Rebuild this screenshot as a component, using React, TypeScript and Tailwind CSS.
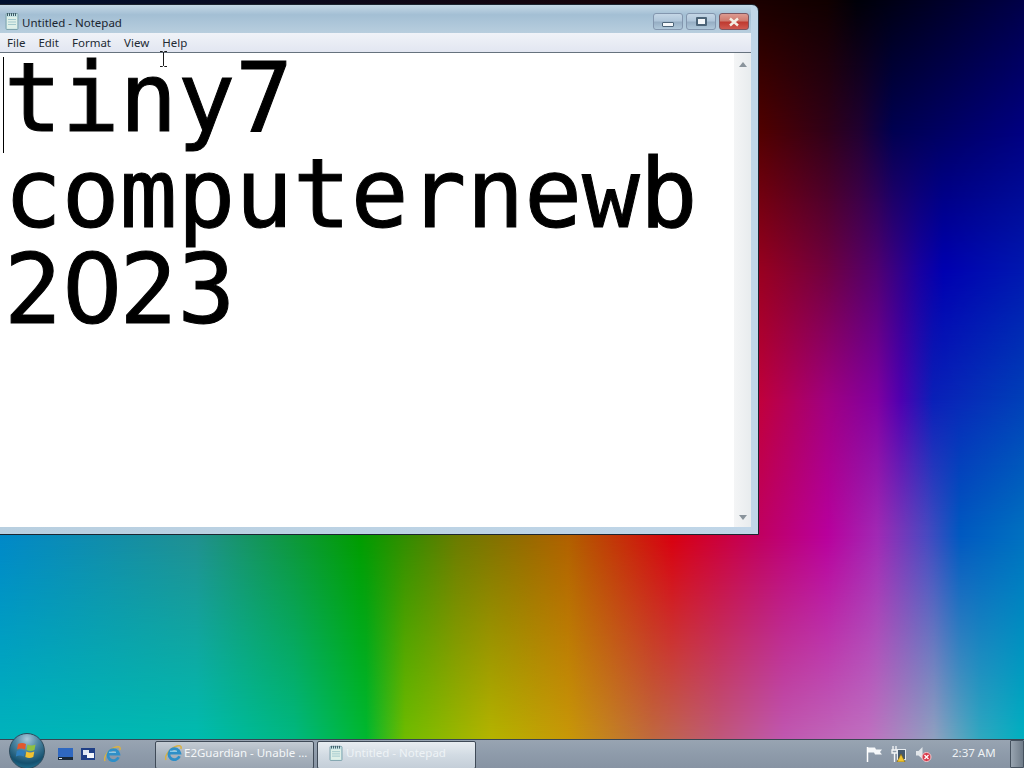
import React from "react";

const ui = "font-['Noto_Sans','Open_Sans',sans-serif]";

function NotepadIcon({ tall = false }: { tall?: boolean }) {
  return (
    <svg width={14} height={tall ? 18 : 16} viewBox="0 0 14 18" preserveAspectRatio="none" className="shrink-0">
      <rect x="1" y="1.500" width="12" height="16" rx="1" fill="#c4e2e4" stroke="#7ea3ac" />
      <rect x="2" y="5" width="10" height="11.500" fill="#dff0e8" />
      <path d="M2.500 1v3M4.500 1v3M6.500 1v3M8.500 1v3M10.500 1v3" stroke="#3d5a66" strokeWidth="1" />
      <path d="M3 7.500h8M3 10h8M3 12.500h8" stroke="#a3c9cd" strokeWidth="1" />
    </svg>
  );
}

function IeIcon() {
  return (
    <svg width="17" height="16" viewBox="0 0 17 16" className="shrink-0">
      <path d="M1 15C-1 11 5 3 12 1c3-.8 5 0 3.800 3" fill="none" stroke="#d9b244" strokeWidth="1.500" />
      <path d="M14.500 11.300A5.500 5.500 0 1 1 14.800 8H4.500" fill="none" stroke="#2e8fc8" strokeWidth="2.800" />
      <path d="M5 6.300h7" stroke="#8fd0ec" strokeWidth="1.200" />
    </svg>
  );
}

function StartOrb() {
  return (
    <div className="absolute left-[9px] top-[-7px] flex h-[36px] w-[36px] items-center justify-center rounded-full border border-[#2c4a5c] bg-[radial-gradient(circle_at_50%_15%,#a8c8d8_0%,#4d86a3_35%,#14506e_72%,#2a86a8_100%)]">
      <svg width="22" height="21" viewBox="0 0 22 21">
        <path d="M2 3c3-1.500 5-1.500 8 0L9 8.500c-3-1.500-5-1.500-8 0z" fill="#e2582d" />
        <path d="M11.500 3.500c3 1.400 5 1.400 8 0l-1 5.500c-3 1.400-5 1.400-8 0z" fill="#8fc043" />
        <path d="M.8 10c3-1.500 5-1.500 8 0l-1 5.500c-3-1.500-5-1.500-8 0z" fill="#2f7fbd" />
        <path d="M10.300 10.500c3 1.400 5 1.400 8 0l-1 5.500c-3 1.400-5 1.400-8 0z" fill="#f2c230" />
      </svg>
    </div>
  );
}

function CaptionButton({ kind }: { kind: "min" | "max" | "close" }) {
  if (kind === "close") {
    return (
      <div className="flex h-[17px] w-[30px] items-center justify-center rounded-[3px] border border-[#7d5660] bg-[linear-gradient(#dd9a90_0%,#cf7a6e_45%,#bf3a30_55%,#cf5a50_100%)]">
        <svg width="12" height="10" viewBox="0 0 12 10">
          <path d="M2 1.500l8 7M10 1.500l-8 7" stroke="#f4efe4" strokeWidth="2.400" />
        </svg>
      </div>
    );
  }
  return (
    <div className="flex h-[17px] w-[30px] items-center justify-center rounded-[3px] border border-[#8396ae] bg-[linear-gradient(#c4d6e6_0%,#b0c6da_45%,#96aec4_55%,#b0c8da_100%)]">
      {kind === "min" ? (
        <div className="mt-[5px] h-[5px] w-[12px] rounded-[1px] border border-[#4c6478] bg-[#f4f7fa]" />
      ) : (
        <div className="h-[9px] w-[11px] rounded-[1px] border-2 border-[#4c6478] bg-[#f4f7fa]" />
      )}
    </div>
  );
}

function TaskButton({ active, label, icon }: { active?: boolean; label: string; icon: React.ReactNode }) {
  return (
    <div
      className={
        "flex h-[28px] w-[159px] items-center gap-[2px] whitespace-nowrap rounded-[2px] border border-[#3f4a57] pb-[3px] pl-[9px] text-[11.5px] " +
        (active
          ? "bg-[linear-gradient(#e8edf1_0%,#d2dbe3_50%,#c4ced8_100%)] text-[#eef3f6]"
          : "bg-[linear-gradient(#c4ccd4_0%,#a9b3be_50%,#9aa5b2_100%)] text-[#f4f7f9]")
      }
    >
      {icon}
      <span>{label}</span>
    </div>
  );
}

export default function App() {
  return (
    <div className={"relative h-[768px] w-[1024px] overflow-hidden " + ui}>
      {/* Wallpaper: horizontal colour bands at fixed heights, cross-faded downwards */}
      <div className="absolute inset-0 bg-[linear-gradient(90deg,#00b4bc_0px,#00bcb0_196px,#00b880_294px,#00b830_366px,#70bc00_405px,#b4b400_490px,#c89808_568px,#c06840_653px,#c05878_718px,#c058b0_784px,#c070c0_868px,#90a0c0_934px,#30a8c0_980px,#00b0c0_1024px)]" />
      <div className="absolute inset-0 bg-[linear-gradient(90deg,#0088c8_0px,#209090_196px,#009c00_360px,#6a7a00_457px,#b06000_568px,#d80010_672px,#c00060_760px,#b8009c_827px,#a028b4_877px,#4848c0_927px,#0058c0_960px,#0070c0_1024px)] [mask-image:linear-gradient(#000_535px,transparent_738px)]" />
      <div className="absolute inset-0 bg-[linear-gradient(90deg,#c0003c_760px,#a00080_827px,#8000a0_877px,#5000b0_900px,#0a20b8_933px,#0040b8_1024px)] [mask-image:linear-gradient(#000_400px,transparent_530px)]" />
      <div className="absolute inset-0 bg-[linear-gradient(90deg,#980020_760px,#700040_827px,#500070_877px,#1800a0_920px,#0000b0_943px,#0018b0_1024px)] [mask-image:linear-gradient(#000_270px,transparent_400px)]" />
      <div className="absolute inset-0 bg-[linear-gradient(90deg,#500000_760px,#300018_827px,#200030_860px,#000050_893px,#000080_1024px)] [mask-image:linear-gradient(#000_130px,transparent_270px)]" />
      <div className="absolute inset-0 bg-[linear-gradient(90deg,#001030_0px,#1a0000_760px,#100000_827px,#000008_857px,#000048_1024px)] [mask-image:linear-gradient(#000_0px,transparent_130px)]" />

      {/* Notepad window */}
      <div className="absolute left-[-8px] top-[4px] flex h-[531px] w-[767px] flex-col rounded-t-[7px] border border-[#1c2530] bg-[linear-gradient(90deg,#b8cfe0_0%,#c0d6e8_100%)] px-[7px] pb-[7px]">
        <div className="flex h-[28px] shrink-0 items-start justify-between bg-[linear-gradient(#c5d8e6_0%,#a3bfd4_35%,#b8cede_100%)] pl-[5px] pr-[2px]">
          <div className="flex items-center gap-[3px] pt-[5px] text-[11.5px] text-[#1a2530]">
            <NotepadIcon tall />
            <span className="pt-[4px]">Untitled - Notepad</span>
          </div>
          <div className="flex gap-[3px] pt-[8px]">
            <CaptionButton kind="min" />
            <CaptionButton kind="max" />
            <CaptionButton kind="close" />
          </div>
        </div>
        <div className="flex h-[20px] shrink-0 items-center gap-[13px] border-b border-[#66727e] bg-[linear-gradient(#f0f3f8_0%,#e2e6f1_100%)] pl-[7px] text-[11.5px] text-[#222a33]">
          <span>File</span>
          <span>Edit</span>
          <span>Format</span>
          <span>View</span>
          <span>Help</span>
        </div>
        <div className="flex min-h-0 flex-1 bg-white">
          <div className="relative flex-1 pl-[4px] font-['DejaVu_Sans_Mono',monospace] text-[96px] leading-[96px] text-black [-webkit-text-stroke:1px_black]">
            <div className="absolute left-[3px] top-[4px] h-[96px] w-px bg-black" />
            <div className="mt-[-3px]">tiny7</div>
            <div>computernewb</div>
            <div>
              2<span className="inline-block w-[57.800px] font-['DejaVu_Sans',sans-serif]">0</span>23
            </div>
          </div>
          <div className="flex w-[17px] flex-col items-center justify-between bg-[linear-gradient(90deg,#f4f5f6_0%,#e8ecee_100%)] pb-[7px] pt-[9px]">
            <div className="h-0 w-0 border-x-[4px] border-b-[5px] border-x-transparent border-b-[#8a949c]" />
            <div className="h-0 w-0 border-x-[4px] border-t-[5px] border-x-transparent border-t-[#8a949c]" />
          </div>
        </div>
      </div>

      {/* I-beam cursor */}
      <svg width="9" height="16" viewBox="0 0 9 16" className="absolute left-[159px] top-[51px]">
        <path d="M1 .5h2.500l1 1 1-1H8M4.500 1.500v13M1 15.500h2.500l1-1 1 1H8" fill="none" stroke="#1a1a1a" />
      </svg>

      {/* Taskbar */}
      <div className="absolute inset-x-0 bottom-0 flex h-[29px] items-center border-t border-[#3a4552] bg-[linear-gradient(#98a4b2_0%,#8f9cab_45%,#8793a3_100%)]">
        <StartOrb />
        <div className="ml-[58px] flex w-[97px] items-center">
          <svg width="15" height="12" viewBox="0 0 15 12">
            <rect width="15" height="12" fill="#2f68c0" />
            <rect y="9" width="15" height="3" fill="#1a2a3a" />
            <rect x="1" y="10" width="3" height="1" fill="#e0e8f0" />
          </svg>
          <svg width="14" height="12" viewBox="0 0 14 12" className="ml-[8px]">
            <rect width="14" height="12" fill="#1f3f86" />
            <rect x="2" y="2" width="6" height="5" fill="#dfe8f5" />
            <rect x="6" y="5" width="7" height="5" fill="#f5f8fc" />
          </svg>
          <div className="ml-[9px]">
            <IeIcon />
          </div>
        </div>
        <div className="flex gap-[3px] pt-px">
          <TaskButton label="E2Guardian - Unable ..." icon={<IeIcon />} />
          <TaskButton
            active
            label="Untitled - Notepad"
            icon={
              <span className="ml-[2px] mr-px">
                <NotepadIcon />
              </span>
            }
          />
        </div>
        <div className="ml-auto flex items-center pb-px">
          <svg width="17" height="16" viewBox="0 0 17 16">
            <path d="M1.500 1v15" stroke="#fff" strokeWidth="1.500" />
            <path d="M2 1.500h7l1 2h6l-2 2.500 2 2.500h-7l-1-2H2z" fill="#f6f8fa" />
          </svg>
          <svg width="16" height="16" viewBox="0 0 16 16" className="ml-[8px]">
            <path d="M2 0v4M5 0v4M1 4h5v3H1zM3.500 7v9" stroke="#f4f6f8" fill="none" strokeWidth="1.300" />
            <rect x="6.500" y="3.500" width="8" height="10" fill="#45596c" stroke="#e8edf1" />
            <path d="M10 8l4 8H6z" fill="#f3c62f" stroke="#7b5e10" strokeWidth=".6" />
          </svg>
          <svg width="17" height="16" viewBox="0 0 17 16" className="ml-[8px]">
            <path d="M1 5h2.500L7.500 1v12L3.500 9.500H1z" fill="#e2e6ea" />
            <circle cx="11.500" cy="11" r="4.500" fill="#d8384a" stroke="#f2c8cc" />
            <path d="M9.500 9l4 4M13.500 9l-4 4" stroke="#fff" strokeWidth="1.300" />
          </svg>
          <span className="ml-[20px] w-[43px] whitespace-nowrap pb-[2px] text-[11.5px] text-[#eef2f5]">2:37 AM</span>
          <div className="ml-[15px] h-[28px] w-[14px] rounded-[1px] border border-[#46525f] bg-[linear-gradient(90deg,#98a4b0_0%,#6f7c89_100%)]" />
        </div>
      </div>
    </div>
  );
}
